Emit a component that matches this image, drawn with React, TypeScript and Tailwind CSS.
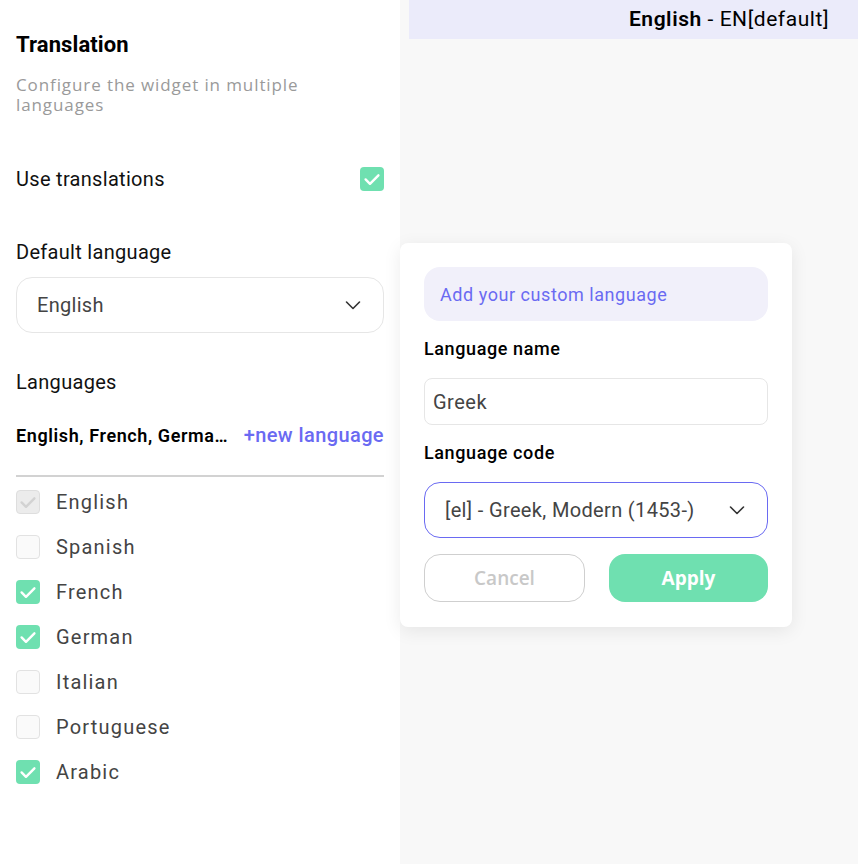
import React, { useState } from "react";

const Check = ({ color = "white" }: { color?: string }) => (
  <svg viewBox="0 0 24 24" className="w-[22px] h-[22px]" fill="none">
    <path d="M5 12.5l4.8 4.8L19 8" stroke={color} strokeWidth="2.6" strokeLinecap="round" strokeLinejoin="round" />
  </svg>
);

const Chevron = () => (
  <svg viewBox="0 0 20 20" className="w-[20px] h-[20px]" fill="none">
    <path d="M3.5 7l6.5 6.5L16.5 7" stroke="#333" strokeWidth="1.6" strokeLinecap="round" strokeLinejoin="round" />
  </svg>
);

const Box = ({ state }: { state: "on" | "off" | "disabled" }) => {
  if (state === "on")
    return (
      <span className="w-6 h-6 rounded-[4px] bg-[#6fe0b0] flex items-center justify-center shrink-0">
        <Check />
      </span>
    );
  if (state === "disabled")
    return (
      <span className="w-6 h-6 rounded-[4px] bg-[#ececec] border border-[#dedede] flex items-center justify-center shrink-0">
        <Check color="#d2d2d2" />
      </span>
    );
  return <span className="w-6 h-6 rounded-[4px] bg-[#fafafa] border border-[#e2e2e2] shrink-0" />;
};

const langs: { name: string; state: "on" | "off" | "disabled" }[] = [
  { name: "English", state: "disabled" },
  { name: "Spanish", state: "off" },
  { name: "French", state: "on" },
  { name: "German", state: "on" },
  { name: "Italian", state: "off" },
  { name: "Portuguese", state: "off" },
  { name: "Arabic", state: "on" },
];

const roboto = "font-['Roboto',sans-serif]";
const mont = "font-['Open_Sans',sans-serif]";

const App = () => {
  const [name] = useState("Greek");

  return (
    <div className={`flex w-[858px] h-[864px] overflow-hidden ${roboto}`}>
      {/* left settings panel */}
      <div className="w-[400px] shrink-0 bg-white px-4 pt-[31px] relative z-0 shadow-[2px_0_6px_rgba(0,0,0,0.03)]">
        <h1 className="text-[22px] font-bold leading-7 text-black tracking-[0.1px]">Translation</h1>
        <p className={`mt-[16px] text-[17px] leading-5 text-[#9a9a9a] tracking-[0.9px] ${mont}`}>
          Configure the widget in multiple
          <br />
          languages
        </p>

        <div className="mt-[52px] flex items-center justify-between">
          <span className="text-[20px] text-[#111] leading-6 tracking-[0.3px]">Use translations</span>
          <Box state="on" />
        </div>

        <div className="mt-[49px] text-[20px] text-[#111] leading-6 tracking-[0.3px]">Default language</div>
        <div className="mt-[13px] h-[56px] rounded-2xl border border-[#e6e6e6] flex items-center justify-between pl-5 pr-5">
          <span className="text-[20px] text-[#444] tracking-[0.3px]">English</span>
          <Chevron />
        </div>

        <div className="mt-[37px] text-[20px] text-[#111] leading-6 tracking-[0.3px]">Languages</div>
        <div className="mt-[26px] flex items-center justify-between">
          <span className="text-[18px] font-semibold text-black tracking-[0.6px] whitespace-nowrap">
            English, French, Germa…
          </span>
          <span className="text-[20px] font-medium text-[#6a6af2] tracking-[0.4px]">+new language</span>
        </div>
        <div className="mt-[25px] h-[2px] bg-[#d2d2d2]" />

        <ul className="mt-[2px] flex flex-col">
          {langs.map((l) => (
            <li key={l.name} className="flex items-center gap-4 h-[45px]">
              <Box state={l.state} />
              <span className="text-[20px] text-[#444] tracking-[1.2px]">{l.name}</span>
            </li>
          ))}
        </ul>
      </div>

      {/* right preview area */}
      <div className="flex-1 bg-[#f8f8f8] pl-[9px] relative">
        <div className="h-[39px] bg-[#ebebfa] flex items-center justify-end pr-[29px] text-[21px] text-black tracking-[0.55px]">
          <span className="font-semibold">English</span>
          <span>&nbsp;- EN[default]</span>
        </div>
      </div>

      {/* popover */}
      <div className="absolute left-[400px] top-[243px] w-[392px] bg-white rounded-lg shadow-[0_4px_18px_rgba(0,0,0,0.08)] px-6 pt-6 pb-[25px]">
        <div className="h-[54px] rounded-2xl bg-[#f1f0fa] flex items-center px-4 text-[18px] text-[#6a6af2] tracking-[0.55px]">
          Add your custom language
        </div>
        <div className="mt-[16px] text-[18px] font-medium text-black leading-6 tracking-[0.6px]">Language name</div>
        <div className="mt-[17px] h-[47px] rounded-lg border border-[#e6e6e6] flex items-center px-[8px] text-[20px] text-[#444] tracking-[0.5px]">
          {name}
        </div>
        <div className="mt-[16px] text-[18px] font-medium text-black leading-6 tracking-[0.6px]">Language code</div>
        <div className="mt-[17px] h-[56px] rounded-2xl border border-[#6a6af2] flex items-center justify-between pl-5 pr-5">
          <span className="text-[20px] text-[#444] tracking-[0.35px]">[el] - Greek, Modern (1453-)</span>
          <Chevron />
        </div>
        <div className="mt-[16px] flex gap-6">
          <button className={`flex-1 h-[48px] rounded-2xl border border-[#cfcfcf] text-[19px] text-[#c8c8c8] font-semibold ${mont}`}>
            Cancel
          </button>
          <button className={`flex-1 h-[48px] rounded-2xl bg-[#6fe0b0] text-[19px] text-white font-bold ${mont}`}>
            Apply
          </button>
        </div>
      </div>
    </div>
  );
};

export default App;
